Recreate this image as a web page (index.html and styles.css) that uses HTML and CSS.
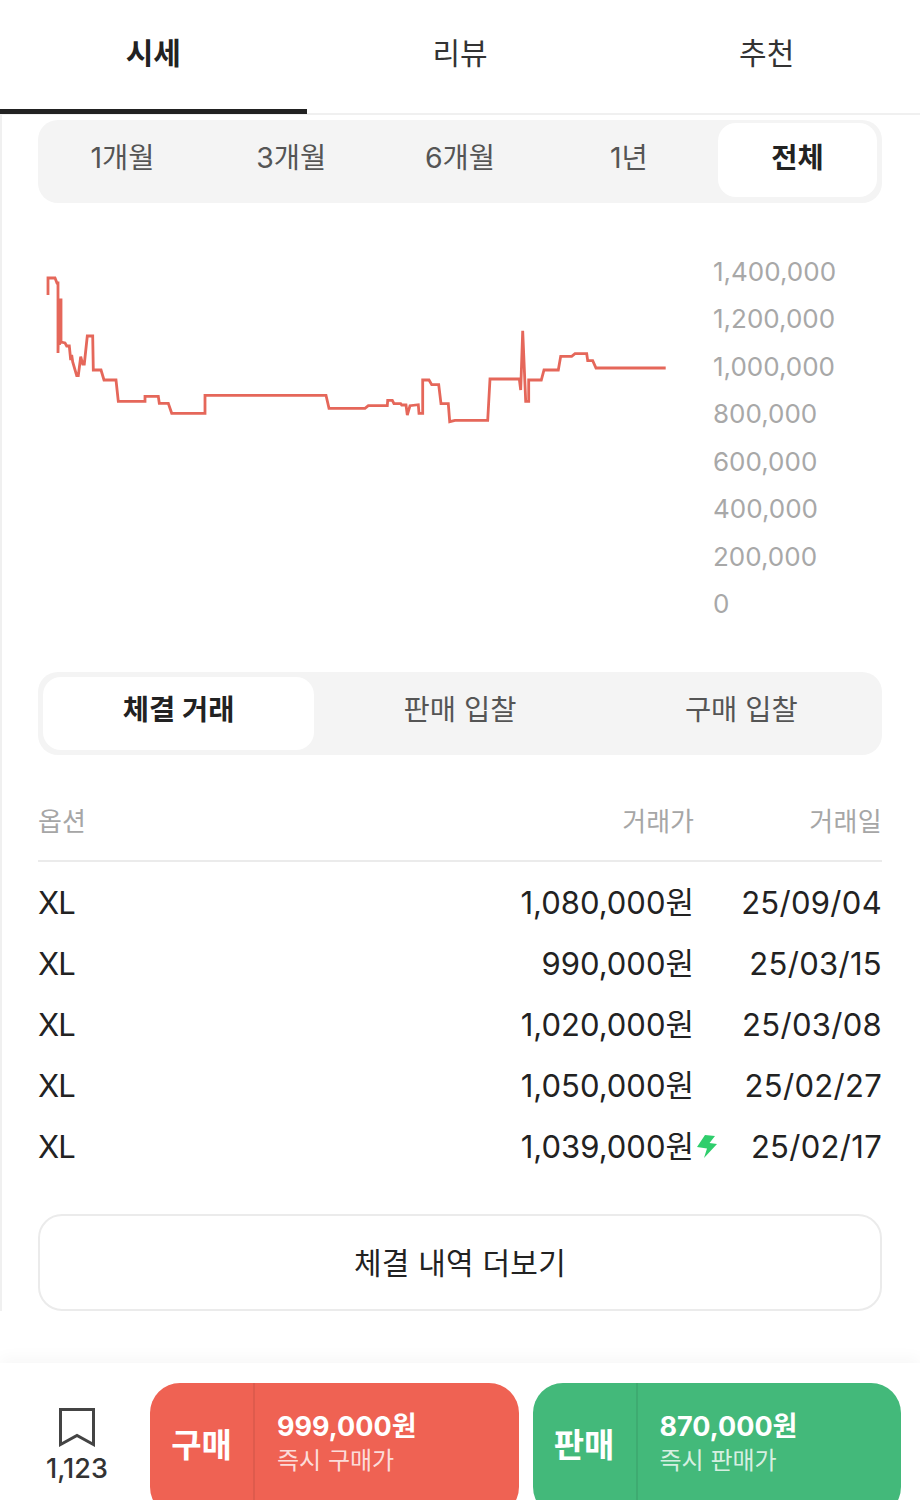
FILE: index.html
```html
<!DOCTYPE html>
<html lang="ko">
  <head>
    <meta charset="UTF-8">
    <meta name="viewport" content="width=device-width, initial-scale=1.0">
    <title>시세</title>
    <link rel="stylesheet" href="styles.css">
  </head>
  <body>
    <nav class="tabs">
      <a class="tab active">시세</a>
      <a class="tab">리뷰</a>
      <a class="tab">추천</a>
    </nav>

    <main class="content">
      <div class="segment periods">
        <span class="seg-item">1개월</span>
        <span class="seg-item">3개월</span>
        <span class="seg-item">6개월</span>
        <span class="seg-item">1년</span>
        <span class="seg-item selected">전체</span>
      </div>

      <div class="chart">
        <svg class="chart-line" viewBox="38 248 650 372" width="650" height="372">
          <path d="M48 295V278H55L57 283H58V353L59 300L59.5 345L60 300H61V342L65 343L66.7 346H69.3L70.7 360L71.7 355L72.7 362L76.7 375.7H78.3L80.7 356.7L82.7 364H84.3L87.3 336H92.7L93.3 370H101L104 380H116L118.3 401.3H145V396.3H158.3L159.3 403.3H168.3L171.7 413.3H205V395.3H326L329 408.3H365L368.3 405.7H387.3L387.7 400.3H392.3L394 403.7H400.7L401.7 405H406L407.3 415L410 405.7L418.3 404.7L419 413.3H422.7V380H429L431.7 384.7H438.7L441 403.7H448.3L449.7 421.7L455 420.3H487.7L490 379H519.3L520.7 390L522.7 330.7L525.7 401.3H528.7V380H541.3L544 370H558.3L560.7 356.3H571.7L575 353.7H586.7L587.7 360.7H592.7L596 368H665.7"/>
        </svg>
        <ul class="axis">
          <li>1,400,000</li>
          <li>1,200,000</li>
          <li>1,000,000</li>
          <li>800,000</li>
          <li>600,000</li>
          <li>400,000</li>
          <li>200,000</li>
          <li>0</li>
        </ul>
      </div>

      <div class="segment kinds">
        <span class="seg-item selected">체결 거래</span>
        <span class="seg-item">판매 입찰</span>
        <span class="seg-item">구매 입찰</span>
      </div>

      <div class="table">
        <div class="row head">
          <span class="col-option">옵션</span>
          <span class="col-price">거래가</span>
          <span class="col-date">거래일</span>
        </div>
        <div class="rows">
          <div class="row">
            <span class="col-option">XL</span>
            <span class="col-price">1,080,000원</span>
            <span class="col-date">25/09/04</span>
          </div>
          <div class="row">
            <span class="col-option">XL</span>
            <span class="col-price">990,000원</span>
            <span class="col-date">25/03/15</span>
          </div>
          <div class="row">
            <span class="col-option">XL</span>
            <span class="col-price">1,020,000원</span>
            <span class="col-date">25/03/08</span>
          </div>
          <div class="row">
            <span class="col-option">XL</span>
            <span class="col-price">1,050,000원</span>
            <span class="col-date">25/02/27</span>
          </div>
          <div class="row">
            <span class="col-option">XL</span>
            <span class="col-price">1,039,000원
              <svg class="bolt" viewBox="0 0 20 23" width="20" height="23"><path d="M8 0L18 1L12.5 8L20 9L7 23L10 13.5L0 12Z"/></svg>
            </span>
            <span class="col-date">25/02/17</span>
          </div>
        </div>
      </div>

      <button class="more">체결 내역 더보기</button>
    </main>

    <footer class="bar">
      <div class="wish">
        <svg viewBox="0 0 36 39" width="36" height="39"><path d="M1.5 1.5H34.5V36.5L18 27.5L1.5 36.5Z"/></svg>
        <span>1,123</span>
      </div>
      <div class="deal buy">
        <strong class="deal-label">구매</strong>
        <div class="deal-info">
          <b>999,000원</b>
          <small>즉시 구매가</small>
        </div>
      </div>
      <div class="deal sell">
        <strong class="deal-label">판매</strong>
        <div class="deal-info">
          <b>870,000원</b>
          <small>즉시 판매가</small>
        </div>
      </div>
    </footer>
  </body>
</html>
```

FILE: styles.css
```css
* {
  box-sizing: border-box;
  margin: 0;
  padding: 0;
}

html, body {
  height: 1500px;
  overflow: hidden;
}

body {
  background: #fff;
  color: #222;
  font-family: Inter, "Noto Sans CJK KR", sans-serif;
}

.tabs {
  display: flex;
  height: 115px;
  border-bottom: 2px solid #f0f0f0;
}

.tab {
  flex: 1;
  height: 114px;
  padding-top: 31px;
  font-size: 30px;
  line-height: 44px;
  text-align: center;
  color: #333;
}

.tab.active {
  font-weight: 700;
  color: #222;
  border-bottom: 5px solid #222;
}

.content {
  height: 1196px;
  padding: 5px 38px 0 36px;
  border-left: 2px solid #f0f0f0;
  margin-bottom: 52px;
}

.segment {
  display: grid;
  grid-auto-flow: column;
  grid-auto-columns: 1fr;
  height: 83px;
  padding: 5px 0;
  background: #f4f4f4;
  border-radius: 20px;
}

.periods {
  padding: 3px 0 6px;
}

.periods .seg-item {
  line-height: 69px;
}

.seg-item {
  font-size: 28.5px;
  line-height: 66px;
  text-align: center;
  color: #555;
}

.seg-item.selected {
  margin: 0 5px;
  background: #fff;
  border-radius: 18px;
  font-weight: 700;
  color: #222;
}

.chart {
  display: flex;
  height: 469px;
  padding-top: 45px;
}

.chart-line {
  flex: none;
}

.chart-line path {
  fill: none;
  stroke: #e5675a;
  stroke-width: 2.8;
  stroke-linejoin: miter;
}

.axis {
  list-style: none;
  margin-left: 25px;
  color: #a8a8a8;
  font-size: 26px;
  line-height: 47.44px;
}

.table {
  margin-top: 38px;
}

.row {
  display: flex;
  font-size: 31px;
  line-height: 61px;
}

.head {
  height: 69px;
  font-size: 26px;
  line-height: 58px;
  color: #a6a6a6;
  border-bottom: 2px solid #ebebeb;
}

.rows {
  margin-bottom: 37px;
  padding-top: 10px;
}

.col-option {
  flex: 1;
  letter-spacing: -1px;
}

.head .col-option {
  letter-spacing: 0;
}

.col-price {
  position: relative;
  width: 300px;
  text-align: right;
}

.col-date {
  width: 188px;
  letter-spacing: .3px;
  text-align: right;
}

.bolt {
  position: absolute;
  left: 100%;
  top: 19px;
  margin-left: 3px;
  fill: #2fce6c;
}

.more {
  display: block;
  width: 100%;
  height: 97px;
  padding-bottom: 4px;
  background: #fff;
  border: 2px solid #ebebeb;
  border-radius: 24px;
  font-family: inherit;
  font-size: 30px;
  letter-spacing: .2px;
  color: #222;
}

.bar {
  display: flex;
  gap: 14px;
  height: 137px;
  padding: 20px 19px 0 0;
  box-shadow: 0 -6px 14px rgba(0, 0, 0, .03);
}

.wish {
  display: flex;
  flex: none;
  flex-direction: column;
  align-items: center;
  width: 136px;
  padding: 25px 0 0 18px;
  font-size: 27px;
  font-weight: 500;
  color: #333;
}

.wish svg {
  fill: none;
  stroke: #444;
  stroke-width: 3;
  margin-bottom: 5px;
}

.deal {
  display: flex;
  flex: 1;
  height: 134px;
  border-radius: 30px;
  color: #fff;
}

.buy {
  background: #ef6253;
}

.sell {
  background: #43b97a;
}

.deal-label {
  flex: none;
  width: 105px;
  padding-top: 38px;
  border-right: 2px solid rgba(0, 0, 0, .07);
  font-size: 33px;
  font-weight: 700;
  line-height: 48px;
  text-align: center;
}

.deal-info {
  display: flex;
  flex-direction: column;
  padding: 26px 0 0 22px;
}

.deal-info b {
  font-size: 27px;
  font-weight: 700;
  line-height: 36px;
}

.deal-info small {
  font-size: 24px;
  line-height: 32px;
  color: rgba(255, 255, 255, .8);
}
```
